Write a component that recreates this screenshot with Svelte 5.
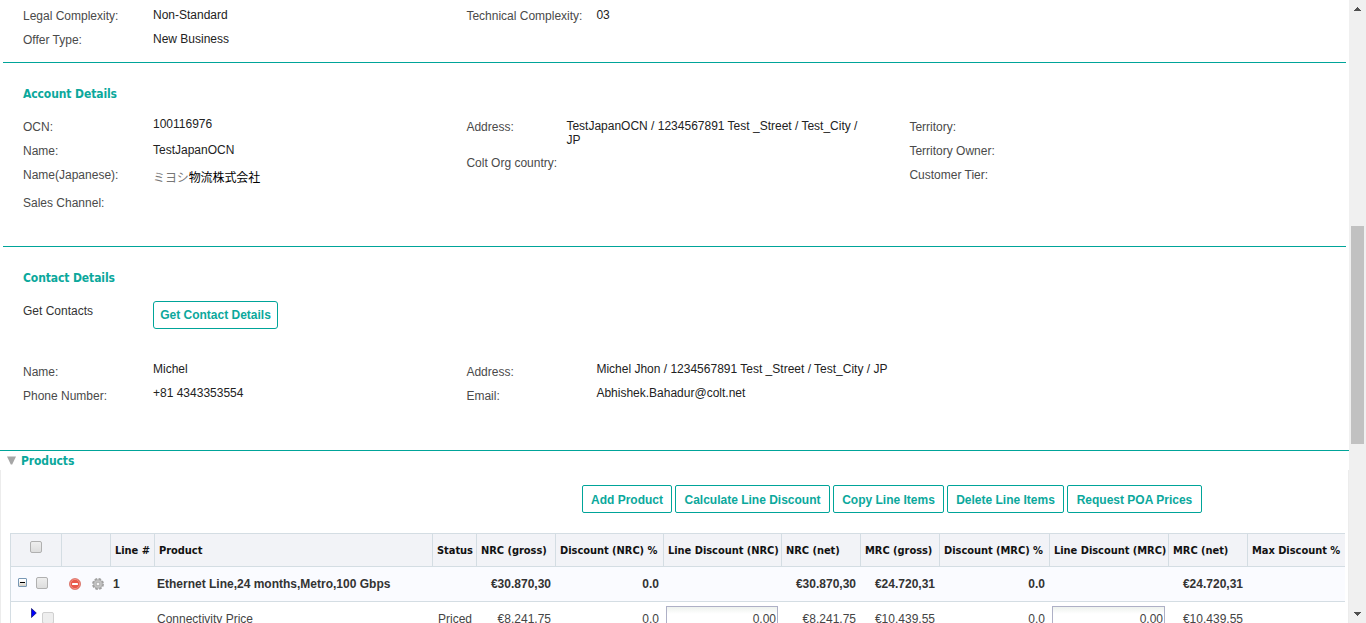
<script>
  const columns = [
    { w: 51, t: '' }, { w: 49, t: '' }, { w: 44, t: 'Line #' }, { w: 278, t: 'Product' },
    { w: 44, t: 'Status' }, { w: 79, t: 'NRC (gross)' }, { w: 108, t: 'Discount (NRC) %' },
    { w: 118, t: 'Line Discount (NRC)' }, { w: 79, t: 'NRC (net)' }, { w: 79, t: 'MRC (gross)' },
    { w: 110, t: 'Discount (MRC) %' }, { w: 119, t: 'Line Discount (MRC)' }, { w: 79, t: 'MRC (net)' },
    { w: 98, t: 'Max Discount %' }
  ];
  const template = columns.map((c) => c.w + 'px').join(' ');
  const total = ['', '€30.870,30', '0.0', '', '€30.870,30', '€24.720,31', '0.0', '', '€24.720,31', ''];
  const actions = [
    { t: 'Add Product', w: 90 }, { t: 'Calculate Line Discount', w: 155 }, { t: 'Copy Line Items', w: 111 },
    { t: 'Delete Line Items', w: 117 }, { t: 'Request POA Prices', w: 135 }
  ];
</script>

<div class="screen">
  <main>
    <section class="general">
      <div class="labels wide"><span>Legal Complexity:</span><span>Offer Type:</span></div>
      <div class="values first"><span>Non-Standard</span><span>New Business</span></div>
      <div class="labels wide"><span>Technical Complexity:</span></div>
      <div class="values"><span>03</span></div>
    </section>

    <section class="block account">
      <h2>Account Details</h2>
      <div class="fields">
        <div class="labels wide"><span>OCN:</span><span>Name:</span><span>Name(Japanese):</span><span class="tall">Sales Channel:</span></div>
        <div class="values first acc"><span>100116976</span><span>TestJapanOCN</span><span class="jp"><i>ミヨシ</i>物流株式会社</span></div>
        <div class="labels narrow"><span>Address:</span><span class="org">Colt Org country:</span></div>
        <p class="address">TestJapanOCN / 1234567891 Test _Street / Test_City /<br />JP</p>
        <div class="labels"><span>Territory:</span><span>Territory Owner:</span><span>Customer Tier:</span></div>
      </div>
    </section>

    <section class="block contact">
      <h2>Contact Details</h2>
      <div class="get">
        <span>Get Contacts</span>
        <button class="fetch">Get Contact Details</button>
      </div>
      <div class="fields">
        <div class="labels wide"><span>Name:</span><span>Phone Number:</span></div>
        <div class="values first"><span>Michel</span><span>+81 4343353554</span></div>
        <div class="labels wide"><span>Address:</span><span>Email:</span></div>
        <div class="values"><span>Michel Jhon / 1234567891 Test _Street / Test_City / JP</span><span>Abhishek.Bahadur@colt.net</span></div>
      </div>
    </section>

    <section class="products">
      <header>
        <svg width="9" height="9" viewBox="0 0 9 9"><path d="M0 .5h9L5.2 8.5H3.8z" fill="#a6a6a6" /></svg>
        <h2>Products</h2>
      </header>
      <div class="panel">
        <div class="actions">
          {#each actions as a}<button style="width:{a.w}px">{a.t}</button>{/each}
        </div>
        <div class="table">
          <div class="row head" style="grid-template-columns:{template}">
            {#each columns as c, i}
              <div class="cell">{#if i === 0}<b class="check"></b>{:else}<span>{c.t}</span>{/if}</div>
            {/each}
          </div>
          <div class="row total" style="grid-template-columns:{template}">
            <div class="tools pick">
              <svg width="9" height="9" viewBox="0 0 9 9"><defs><linearGradient id="box" x2="0" y2="1"><stop offset=".3" stop-color="#fff" /><stop offset="1" stop-color="#cfc9bd" /></linearGradient></defs><rect x=".5" y=".5" width="8" height="8" rx=".5" fill="url(#box)" stroke="#7898b5" /><path d="M2 4.5h5" stroke="#000" /></svg>
              <b class="check"></b>
            </div>
            <div class="tools acts">
              <svg width="12" height="12" viewBox="0 0 12 12"><circle cx="6" cy="6" r="5.6" fill="#e8584a" stroke="#d2695e" stroke-width=".6" /><circle cx="6" cy="6" r="4.6" fill="none" stroke="#f7a59b" stroke-width=".7" /><rect x="3" y="5" width="6" height="2" rx=".4" fill="#fff" /></svg>
              <svg width="12" height="12" viewBox="0 0 12 12"><circle cx="6" cy="6" r="4.8" fill="#b2b2b2" /><circle cx="6" cy="6" r="5.1" fill="none" stroke="#a0a0a0" stroke-width="1.7" stroke-dasharray="2.6 1.4" /><circle cx="6" cy="6" r="3" fill="none" stroke="#c3c3c3" stroke-width="1.4" /><circle cx="6" cy="6" r="1.3" fill="#f4f4f4" /></svg>
            </div>
            <div class="left">1</div>
            <div class="left">Ethernet Line,24 months,Metro,100 Gbps</div>
            {#each total as v}<div class="num">{v}</div>{/each}
          </div>
          <div class="row item" style="grid-template-columns:{template}">
            <div class="tools sub">
              <svg width="6" height="10" viewBox="0 0 6 10"><path d="M.5 .5v9L5.3 5z" fill="#00f" stroke="#111166" stroke-width=".7" /></svg>
              <b class="check pale"></b>
            </div>
            <div></div>
            <div></div>
            <div class="left">Connectivity Price</div>
            <div class="num">Priced</div>
            <div class="num">€8.241,75</div>
            <div class="num">0.0</div>
            <div class="entry nrc">0.00</div>
            <div class="num">€8.241,75</div>
            <div class="num">€10.439,55</div>
            <div class="num">0.0</div>
            <div class="entry mrc">0.00</div>
            <div class="num">€10.439,55</div>
            <div></div>
          </div>
        </div>
      </div>
    </section>
  </main>
  <aside>
    <svg width="7" height="4" viewBox="0 0 7 4" shape-rendering="crispEdges"><path d="M3 0h1v1h1v1h1v1h1v1H0V3h1V2h1V1h1z" fill="#505050" /></svg>
    <div class="thumb"></div>
    <svg class="down" width="7" height="4" viewBox="0 0 7 4" shape-rendering="crispEdges"><path d="M0 0h7v1H6v1H5v1H4v1H3V3H2V2H1V1H0z" fill="#505050" /></svg>
  </aside>
</div>

<style>
  :global(body) { margin: 0; overflow: hidden; background: #fff; }
  * { box-sizing: border-box; }
  .screen { display: flex; width: 1366px; height: 623px; overflow: hidden; font: 12px/24px "Liberation Sans", Arial, sans-serif; color: #333; white-space: nowrap; }
  main { width: 1349px; height: 623px; overflow: hidden; }
  section { width: 100%; }
  .general { height: 62px; display: flex; padding: 4px 0 0 23px; }
  .labels, .values { display: flex; flex-direction: column; color: #4a4a4a; }
  .labels.wide { width: 130px; }
  .labels.narrow { width: 100px; }
  .values { color: #222; margin-top: -1px; }
  .values.first { width: 313.4px; }
  .block { width: 1343px; margin-left: 3px; border-top: 1px solid #00a499; padding-left: 20px; height: 184px; }
  .contact { height: 204px; }
  .contact .values { margin-top: -3px; }
  h2 { margin: 0; color: #0ba89c; font: bold 12px/16px "DejaVu Sans Condensed", Tahoma, sans-serif; letter-spacing: -.1px; }
  .block h2 { margin-top: 23px; }
  .fields { display: flex; }
  .account .fields { margin-top: 13px; }
  .labels .tall { line-height: 32px; }
  .labels .org { line-height: 48px; }
  .values.acc { line-height: 26px; margin-top: -4px; }
  .values .jp { line-height: 30px; color: #000; font-family: "Liberation Sans", "Noto Sans CJK JP", sans-serif; letter-spacing: -.1px; }
  .jp i { font-style: normal; color: #777; }
  .address { margin: 4px 0 0; width: 343px; line-height: 14px; color: #222; }
  .get { display: flex; margin-top: 15px; height: 59px; color: #333; }
  .get span { width: 130px; line-height: 20px; }
  button { height: 28px; padding: 2px 0 0; border: 1px solid #00a499; border-radius: 2px; background: #fff; color: #0ba89c; font: bold 12px/24px "Liberation Sans", Arial, sans-serif; text-align: center; }
  .fetch { width: 125px; padding: 0; border-radius: 3px; line-height: 26px; }
  .products { border-top: 1px solid #00a499; height: 173px; }
  .products header { display: flex; align-items: center; height: 19px; padding-left: 7px; gap: 5px; }
  .panel { height: 153px; border: solid #ececec; border-width: 0 1px; padding: 15px 3px 0 9px; overflow: hidden; }
  .actions { display: flex; gap: 3px; padding-left: 572px; height: 48px; }
  .table { width: 1335px; border-left: 1px solid #d4dde3; overflow: hidden; }
  .row { display: grid; width: 1335px; overflow: hidden; }
  .row > div { min-width: 0; }
  .head { height: 34px; background: #f2f3f7; border: solid #d4dde3; border-width: 1px 0; color: #111; font: bold 11px/34px "DejaVu Sans Condensed", Tahoma, sans-serif; letter-spacing: -.04px; }
  .cell { height: 32px; border-right: 1px solid #d4dde3; padding-left: 4px; }
  .cell:first-child { padding: 7px 0 0 19px; }
  .cell:last-child { border: 0; }
  .check { display: block; flex: none; width: 12px; height: 12px; border: 1px solid #b0b0b0; border-radius: 2px; background: linear-gradient(#eee, #ddd); }
  .pale { border-color: #d0d0d0; background: #eee; }
  .total { height: 35px; background: #fafbff; border-bottom: 1px solid #d4dde3; font-weight: bold; line-height: 34px; }
  .left { padding-left: 2px; }
  .num { text-align: right; padding-right: 5px; }
  .tools { display: flex; }
  .pick { padding: 11px 0 0 7px; gap: 9px; }
  .pick .check { margin-top: -1px; }
  .acts { padding: 11px 0 0 7px; gap: 11px; }
  .item { height: 40px; line-height: 34px; color: #444; }
  .sub { padding: 6px 0 0 20px; gap: 5px; }
  .sub .check { margin-top: 4px; }
  .entry { height: 30px; margin: 4px 4px 0 2px; padding-right: 1px; border: 1px solid #aeb0c6; background: linear-gradient(#eef2ee, #fff 7px); text-align: right; line-height: 24px; }
  aside { width: 17px; background: #f0f0f0; padding: 7px 0 0 2px; display: flex; flex-direction: column; }
  aside svg { margin-left: 3px; }
  .thumb { width: 13px; height: 218px; background: #c1c1c1; margin-top: 215px; }
  .down { margin-top: 168px; }
</style>
